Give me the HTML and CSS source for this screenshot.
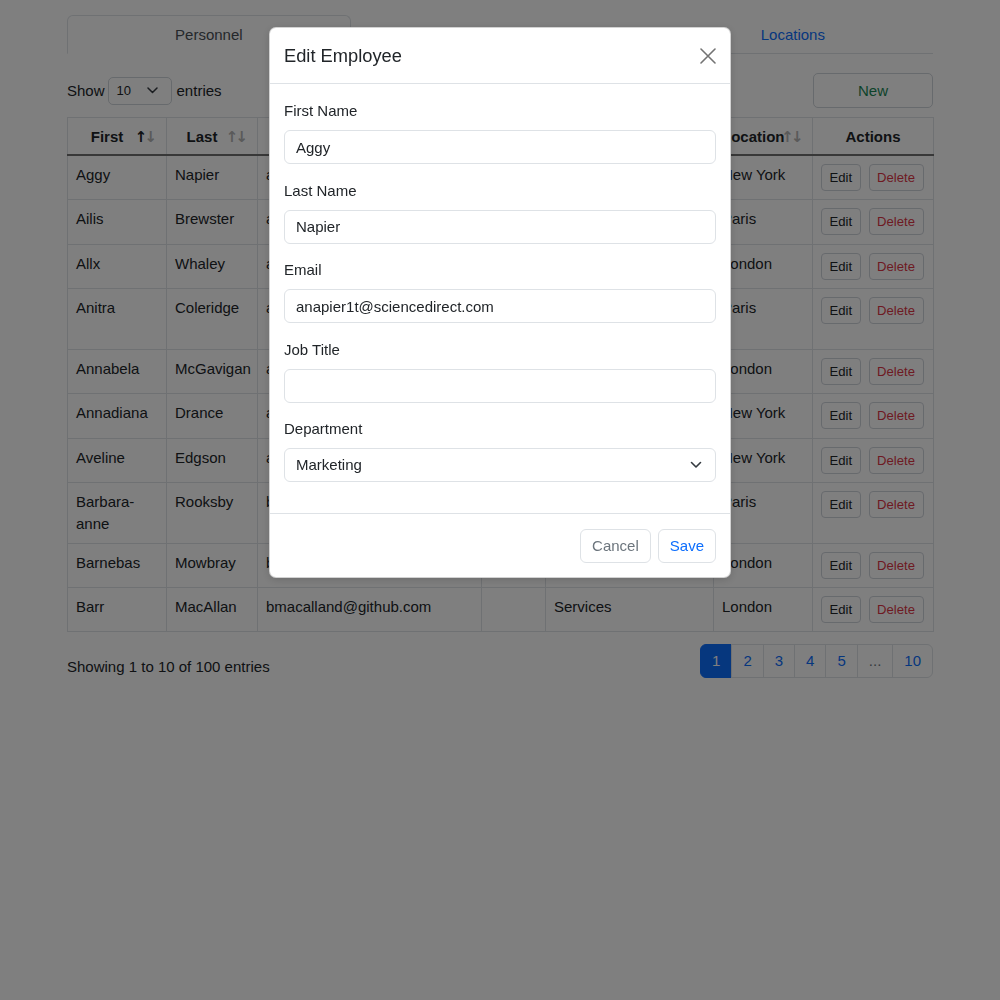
FILE: index.html
```html
<!DOCTYPE html>
<html lang="en">
<head>
<meta charset="utf-8">
<title>Personnel</title>
<link rel="stylesheet" href="styles.css">
</head>
<body>
<div class="container">
  <ul class="tabs">
    <li class="tab active">Personnel</li>
    <li class="tab">Departments</li>
    <li class="tab">Locations</li>
  </ul>

  <div class="toolbar">
    <div class="show">
      <span>Show</span>
      <span class="len">10
        <svg width="11" height="7" viewBox="0 0 11 7"><polyline points="1,1 5.5,5.5 10,1" fill="none" stroke="#343a40" stroke-width="1.5" stroke-linecap="round" stroke-linejoin="round"/></svg>
      </span>
      <span>entries</span>
    </div>
    <button class="btn-new">New</button>
  </div>

  <table class="grid">
    <colgroup>
      <col style="width:99px"><col style="width:91px"><col style="width:224px"><col style="width:64px"><col style="width:168px"><col style="width:99px"><col style="width:121px">
    </colgroup>
    <thead>
      <tr>
        <th><div class="th"><span class="lbl">First</span><span class="sort"><b class="on">↑</b><b>↓</b></span></div></th>
        <th><div class="th"><span class="lbl">Last</span><span class="sort"><b>↑</b><b>↓</b></span></div></th>
        <th><div class="th"><span class="lbl">Email</span><span class="sort"><b>↑</b><b>↓</b></span></div></th>
        <th><div class="th"><span class="lbl">Job Title</span><span class="sort"><b>↑</b><b>↓</b></span></div></th>
        <th><div class="th"><span class="lbl">Department</span><span class="sort"><b>↑</b><b>↓</b></span></div></th>
        <th><div class="th"><span class="lbl">Location</span><span class="sort"><b>↑</b><b>↓</b></span></div></th>
        <th class="center">Actions</th>
      </tr>
    </thead>
    <tbody>
      <tr><td>Aggy</td><td class="nw">Napier</td><td>anapier1t@sciencedirect.com</td><td></td><td>Marketing</td><td>New York</td><td><div class="actions"><button class="sm">Edit</button><button class="sm del">Delete</button></div></td></tr>
      <tr class="tall"><td>Ailis</td><td class="nw">Brewster</td><td>abrewster2k@ebay.co.uk</td><td></td><td>Legal</td><td>Paris</td><td><div class="actions"><button class="sm">Edit</button><button class="sm del">Delete</button></div></td></tr>
      <tr><td>Allx</td><td class="nw">Whaley</td><td>awhaley6@weather.com</td><td></td><td>Sales</td><td>London</td><td><div class="actions"><button class="sm">Edit</button><button class="sm del">Delete</button></div></td></tr>
      <tr><td>Anitra</td><td class="nw">Coleridge</td><td>acoleridge9@alexa.com</td><td></td><td>Research and Development</td><td>Paris</td><td><div class="actions"><button class="sm">Edit</button><button class="sm del">Delete</button></div></td></tr>
      <tr><td>Annabela</td><td class="nw">McGavigan</td><td>amcgavigan1e@google.ru</td><td></td><td>Training</td><td>London</td><td><div class="actions"><button class="sm">Edit</button><button class="sm del">Delete</button></div></td></tr>
      <tr class="tall"><td>Annadiana</td><td class="nw">Drance</td><td>adrance2@zdnet.com</td><td></td><td>Support</td><td>New York</td><td><div class="actions"><button class="sm">Edit</button><button class="sm del">Delete</button></div></td></tr>
      <tr><td>Aveline</td><td class="nw">Edgson</td><td>aedgson1p@vk.com</td><td></td><td>Human Resources</td><td>New York</td><td><div class="actions"><button class="sm">Edit</button><button class="sm del">Delete</button></div></td></tr>
      <tr><td>Barbara-anne</td><td class="nw">Rooksby</td><td>brooksby4@ucla.edu</td><td></td><td>Accounting</td><td>Paris</td><td><div class="actions"><button class="sm">Edit</button><button class="sm del">Delete</button></div></td></tr>
      <tr><td>Barnebas</td><td class="nw">Mowbray</td><td>bmowbray5@php.net</td><td></td><td>Engineering</td><td>London</td><td><div class="actions"><button class="sm">Edit</button><button class="sm del">Delete</button></div></td></tr>
      <tr><td>Barr</td><td class="nw">MacAllan</td><td>bmacalland@github.com</td><td></td><td>Services</td><td>London</td><td><div class="actions"><button class="sm">Edit</button><button class="sm del">Delete</button></div></td></tr>
    </tbody>
  </table>

  <div class="table-foot">
    <div class="info">Showing 1 to 10 of 100 entries</div>
    <ul class="pager">
      <li class="active">1</li>
      <li>2</li>
      <li>3</li>
      <li>4</li>
      <li>5</li>
      <li class="dots">...</li>
      <li>10</li>
    </ul>
  </div>
</div>

<div class="backdrop"></div>

<div class="modal">
  <div class="dialog">
    <div class="m-header">
      <h5 class="m-title">Edit Employee</h5>
      <button class="close" aria-label="Close">
        <svg width="16" height="16" viewBox="0 0 16 16"><path d="M1 1L15 15M15 1L1 15" stroke="#000" stroke-opacity="0.55" stroke-width="1.6" stroke-linecap="round"/></svg>
      </button>
    </div>
    <div class="m-body">
      <div class="field">
        <label>First Name</label>
        <input class="control" type="text" value="Aggy">
      </div>
      <div class="field">
        <label>Last Name</label>
        <input class="control" type="text" value="Napier">
      </div>
      <div class="field">
        <label>Email</label>
        <input class="control" type="text" value="anapier1t@sciencedirect.com">
      </div>
      <div class="field">
        <label>Job Title</label>
        <input class="control" type="text" value="">
      </div>
      <div class="field">
        <label>Department</label>
        <div class="control select">
          <span>Marketing</span>
          <svg width="12" height="8" viewBox="0 0 12 8"><polyline points="1.5,1.5 6,6 10.5,1.5" fill="none" stroke="#343a40" stroke-width="1.6" stroke-linecap="round" stroke-linejoin="round"/></svg>
        </div>
      </div>
    </div>
    <div class="m-footer">
      <button class="mbtn cancel">Cancel</button>
      <button class="mbtn save">Save</button>
    </div>
  </div>
</div>
</body>
</html>
```

FILE: styles.css
```css
html, body {
  margin: 0;
  background: #fff;
}

body {
  font-family: "Liberation Sans", Arial, Helvetica, sans-serif;
  font-size: 15px;
  line-height: 22px;
  color: #212529;
}

.container {
  width: 866px;
  margin: 0 auto;
  padding-top: 15px;
}

/* Tabs */
.tabs {
  display: flex;
  list-style: none;
  margin: 0;
  padding: 0;
  border-bottom: 1px solid #dee2e6;
}

.tab {
  flex: 1 1 auto;
  text-align: center;
  padding: 7.5px 16px;
  border: 1px solid transparent;
  border-radius: 6px 6px 0 0;
  margin-bottom: -1px;
  color: #0d6efd;
}

.tab.active {
  color: #495057;
  background: #fff;
  border-color: #dee2e6 #dee2e6 #fff;
}

/* Toolbar */
.toolbar {
  display: flex;
  justify-content: space-between;
  align-items: center;
  margin-top: 19px;
  height: 35px;
}

.show {
  display: flex;
  align-items: center;
}

.len {
  box-sizing: border-box;
  width: 64px;
  height: 28px;
  margin: 0 5px 0 3px;
  border: 1px solid #ced4da;
  border-radius: 5px;
  display: flex;
  align-items: center;
  justify-content: space-between;
  padding: 0 13px 0 8px;
  font-size: 13px;
}

.btn-new {
  box-sizing: border-box;
  width: 120px;
  height: 35px;
  border: 1px solid #ced4da;
  border-radius: 5px;
  background: #fff;
  color: #198754;
  font: inherit;
}

/* Table */
.grid {
  width: 866px;
  margin-top: 9px;
  border-collapse: collapse;
  table-layout: fixed;
}

.grid th,
.grid td {
  border: 1px solid #dee2e6;
  padding: 8px;
  text-align: left;
  vertical-align: top;
}

.grid tr.tall td {
  padding-bottom: 9px;
}

.grid th {
  padding: 8px 9px 6px 8px;
  font-weight: bold;
  border-bottom: 2px solid #707070;
}

.grid th.center {
  text-align: center;
  padding-right: 8px;
}

.grid td.nw {
  white-space: nowrap;
}

.th {
  display: flex;
  align-items: center;
}

.lbl {
  flex: 1;
  text-align: center;
  white-space: nowrap;
}

.sort {
  width: 19px;
  display: flex;
  justify-content: flex-end;
  font-family: "DejaVu Sans", sans-serif;
  font-size: 15px;
  line-height: 22px;
}

.sort b {
  color: #b4b4b4;
  font-weight: bold;
  margin-left: -3px;
}

.sort b.on {
  color: #212529;
}

.actions {
  display: flex;
  gap: 8px;
}

.sm {
  font-family: inherit;
  font-size: 13.125px;
  line-height: 19px;
  padding: 3px 7.5px;
  border: 1px solid #ced4da;
  border-radius: 4px;
  background: #fff;
  color: #212529;
}

.sm.del {
  color: #dc3545;
}

/* Footer of table */
.table-foot {
  display: flex;
  justify-content: space-between;
  align-items: flex-start;
  margin-top: 12px;
}

.info {
  padding-top: 12px;
}

.pager {
  display: flex;
  list-style: none;
  margin: 0;
  padding: 0;
}

.pager li {
  padding: 5px 11px;
  border: 1px solid #dee2e6;
  margin-left: -1px;
  color: #0d6efd;
  line-height: 22px;
}

.pager li:first-child {
  border-radius: 6px 0 0 6px;
}

.pager li:last-child {
  border-radius: 0 6px 6px 0;
}

.pager li.active {
  background: #0d6efd;
  border-color: #0d6efd;
  color: #fff;
}

.pager li.dots {
  color: #6c757d;
}

/* Modal */
.backdrop {
  position: fixed;
  inset: 0;
  background: rgba(0, 0, 0, 0.5);
}

.modal {
  position: fixed;
  inset: 0;
}

.dialog {
  box-sizing: border-box;
  width: 462px;
  margin: 27px auto 0;
  background: #fff;
  border: 1px solid rgba(0, 0, 0, 0.175);
  border-radius: 7px;
  box-shadow: 0 2px 8px rgba(0, 0, 0, 0.15);
}

.m-header {
  display: flex;
  justify-content: space-between;
  align-items: center;
  padding: 16px 14px;
  border-bottom: 1px solid #dee2e6;
}

.m-title {
  margin: 0;
  font-size: 18.3px;
  line-height: 23px;
  font-weight: normal;
}

.close {
  display: flex;
  padding: 0;
  border: 0;
  background: none;
}

.m-body {
  padding: 16px 14px 15.5px;
}

.field {
  margin-bottom: 15.5px;
}

.field label {
  display: block;
  line-height: 22px;
  margin-bottom: 8px;
}

.control {
  box-sizing: border-box;
  display: block;
  width: 100%;
  height: 34px;
  padding: 0 11px;
  border: 1px solid #dee2e6;
  border-radius: 6px;
  font: inherit;
  color: #212529;
  background: #fff;
  outline: none;
}

.select {
  display: flex;
  align-items: center;
  justify-content: space-between;
  padding-right: 13px;
}

.m-footer {
  display: flex;
  justify-content: flex-end;
  gap: 7px;
  padding: 15px 14px 14px;
  border-top: 1px solid #dee2e6;
}

.mbtn {
  box-sizing: border-box;
  height: 34px;
  padding: 0 11px;
  border: 1px solid #dee2e6;
  border-radius: 6px;
  background: #fff;
  font: inherit;
}

.mbtn.cancel {
  color: #6c757d;
}

.mbtn.save {
  color: #0d6efd;
}
```
